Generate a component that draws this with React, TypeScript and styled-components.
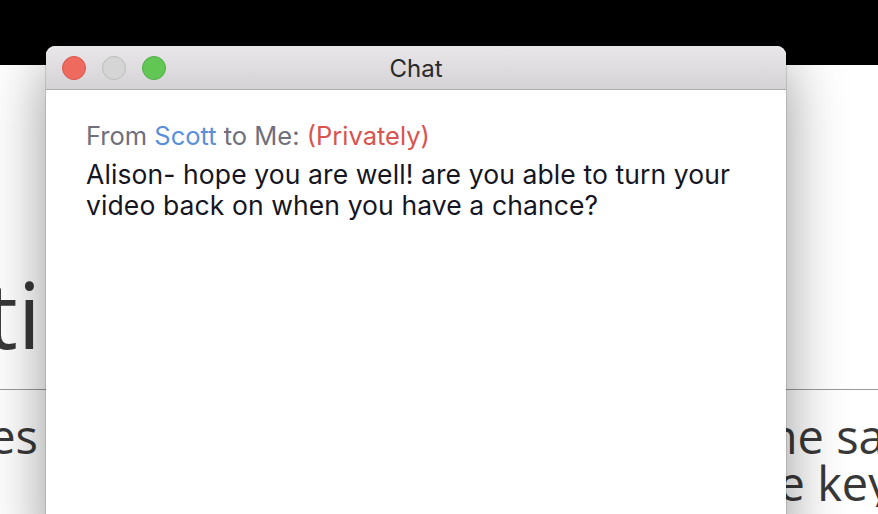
import styled, { createGlobalStyle } from "styled-components"

// Global
const GlobalStyle = createGlobalStyle`
  html, body {
    margin: 0;
    padding: 0;
    background: #000;
  }
  #root {
    width: 878px;
    height: 514px;
    overflow: hidden;
  }
`

// Desktop / slide behind the window
const Screen = styled.div`
  position: relative;
  width: 878px;
  height: 514px;
  overflow: hidden;
  background: #000;
  display: flex;
  flex-direction: column;
`
const TopStrip = styled.div`
  height: 65px;
  flex: none;
  background: #000;
`
const Slide = styled.div`
  flex: 1;
  background: #fff;
  display: flex;
  flex-direction: column;
  font-family: "Open Sans", "DejaVu Sans", sans-serif;
  color: #383838;
`
const TitleRow = styled.div`
  height: 295px;
  flex: none;
  display: flex;
  align-items: flex-end;
`
const ClipLeft = styled.div<{ $width: number; $pad?: number }>`
  width: ${p => p.$width}px;
  flex: none;
  overflow: hidden;
  white-space: nowrap;
  display: flex;
  justify-content: flex-end;
  padding-right: ${p => p.$pad ?? 0}px;
  box-sizing: border-box;
`
const SlideTitle = styled.span`
  font-size: 92px;
  line-height: 92px;
`
const Rule = styled.hr`
  margin: 29px 0 0;
  border: 0;
  border-top: 1.5px solid #9a9a9a;
  flex: none;
`
const BodyRow = styled.div`
  display: flex;
  justify-content: space-between;
  padding-top: 23px;
  font-size: 47px;
  line-height: 47px;
`
const RightText = styled.div`
  width: 118px;
  flex: none;
  overflow: hidden;
`
const RightLine = styled.div<{ $shift: number }>`
  white-space: nowrap;
  margin-left: ${p => p.$shift}px;
`

// Chat window
const Window = styled.div`
  position: absolute;
  left: 46px;
  top: 46px;
  width: 740px;
  height: 500px;
  background: #fff;
  border-radius: 9px 9px 0 0;
  box-shadow: 0 0 0 1px rgba(0, 0, 0, 0.12), 0 18px 60px rgba(0, 0, 0, 0.42);
  display: flex;
  flex-direction: column;
  overflow: hidden;
`
const TitleBar = styled.div`
  position: relative;
  height: 43px;
  flex: none;
  background: linear-gradient(#e9e7e9, #d4d2d4);
  border-bottom: 1px solid #aeacae;
  display: flex;
  align-items: center;
  justify-content: center;
`
const Lights = styled.div`
  position: absolute;
  left: 16px;
  top: 10px;
  display: flex;
  gap: 16px;
`
const Light = styled.span<{ $bg: string; $border: string }>`
  width: 22px;
  height: 22px;
  border-radius: 50%;
  background: ${p => p.$bg};
  border: 1px solid ${p => p.$border};
`
const Title = styled.div`
  font-family: "Inter", "Liberation Sans", sans-serif;
  font-size: 24px;
  color: #2a2a2a;
  margin-top: 2px;
`
const Body = styled.div`
  flex: 1;
  padding: 30px 40px;
  font-family: "Inter", "Liberation Sans", sans-serif;
`
const Header = styled.div`
  color: #6f6f7d;
  font-size: 25.5px;
  line-height: 32px;
`
const Name = styled.span<{ $color: string }>`
  color: ${p => p.$color};
`
const Message = styled.div`
  color: #15151f;
  font-size: 26.5px;
  letter-spacing: 0.1px;
  line-height: 31px;
  margin-top: 7px;
  width: 660px;
`

export default function App() {
  return (
    <>
      <GlobalStyle />
      <Screen>
        <TopStrip />
        <Slide>
          <TitleRow>
            <ClipLeft $width={46} $pad={5}>
              <SlideTitle>Practi</SlideTitle>
            </ClipLeft>
          </TitleRow>
          <Rule />
          <BodyRow>
            <ClipLeft $width={38}>
              <span>Notes</span>
            </ClipLeft>
            <RightText>
              <RightLine $shift={-8}>the same</RightLine>
              <RightLine $shift={-27}>the keyboard</RightLine>
            </RightText>
          </BodyRow>
        </Slide>
        <Window>
          <TitleBar>
            <Lights>
              <Light $bg="#ee6a5f" $border="#d9564c" />
              <Light $bg="#d5d5d5" $border="#bdbdbd" />
              <Light $bg="#62c655" $border="#50ae43" />
            </Lights>
            <Title>Chat</Title>
          </TitleBar>
          <Body>
            <Header>
              From <Name $color="#5a8fdb">Scott</Name> to Me: <Name $color="#d9534f">(Privately)</Name>
            </Header>
            <Message>
              Alison- hope you are well! are you able to turn your video back on when you have a chance?
            </Message>
          </Body>
        </Window>
      </Screen>
    </>
  )
}
